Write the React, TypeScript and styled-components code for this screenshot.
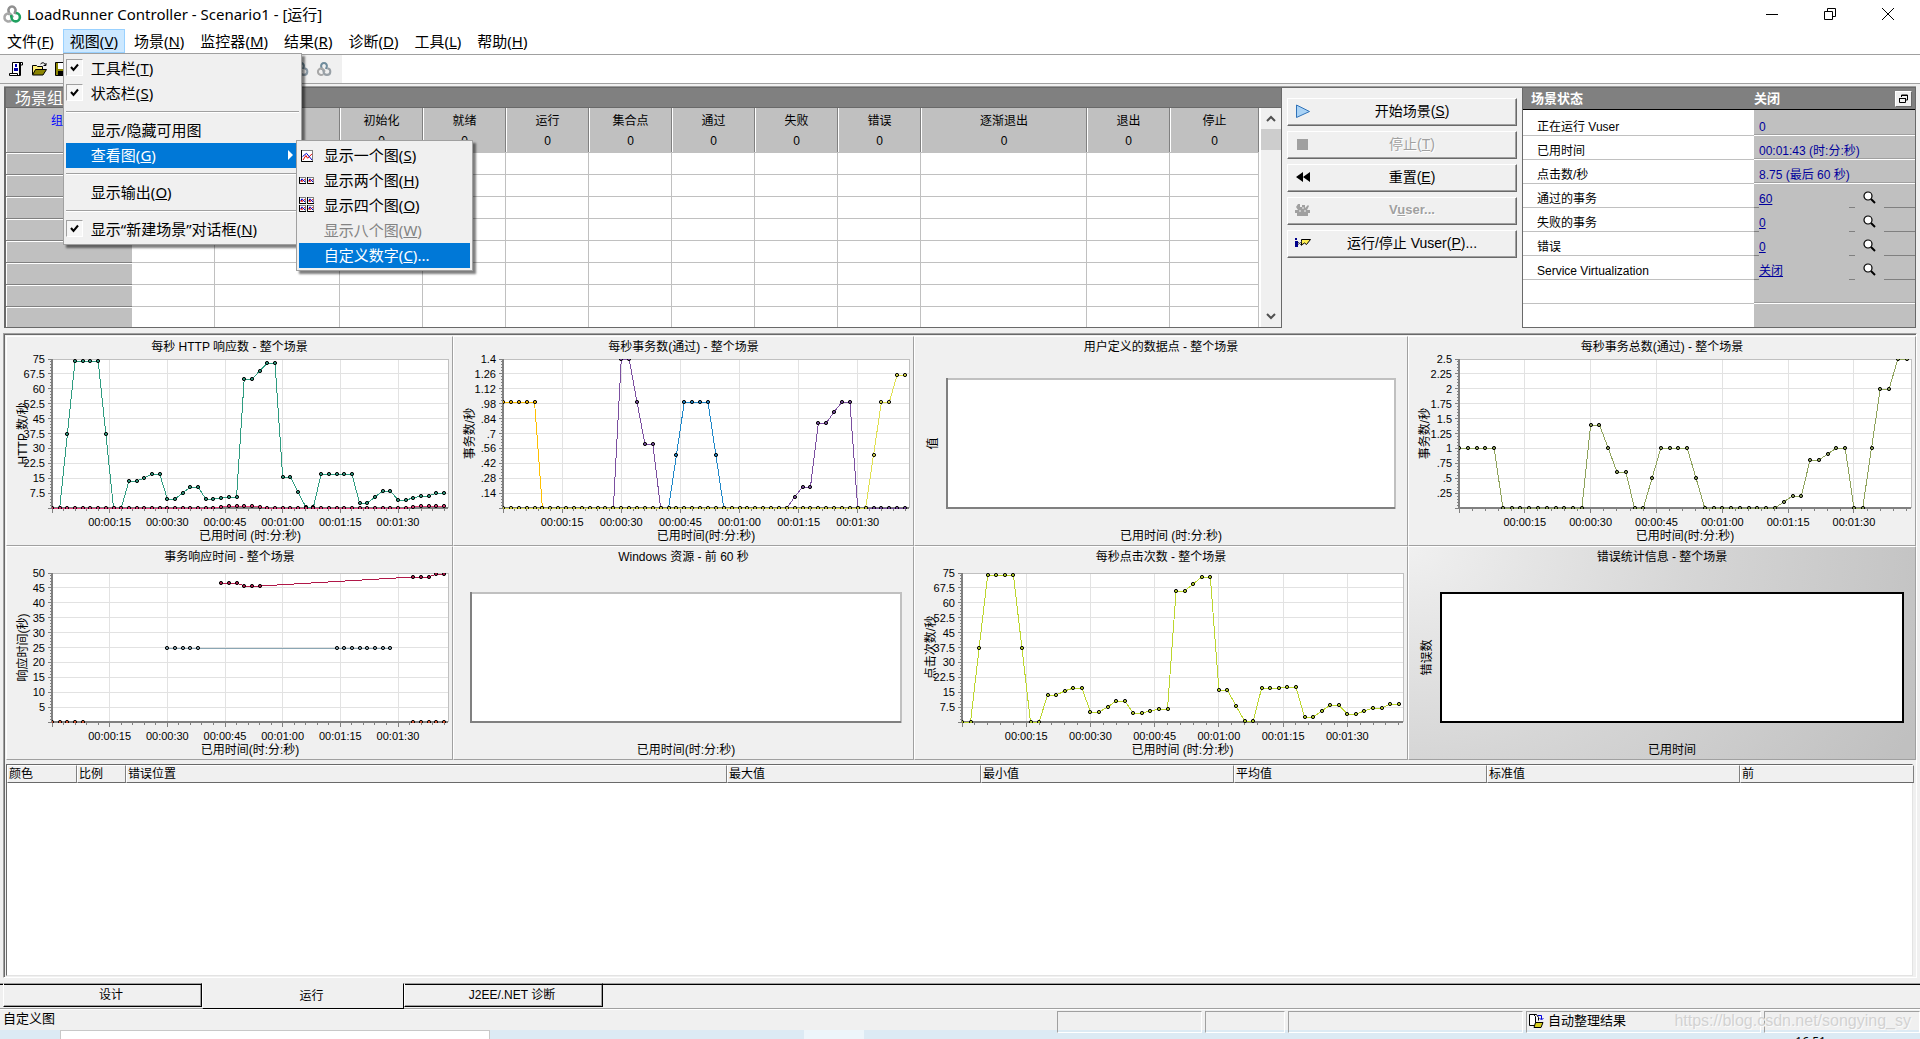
import React, { useLayoutEffect, useRef, useState } from "react";
import styled, { createGlobalStyle, css } from "styled-components";

const uiFont = `"Noto Sans", "Noto Sans CJK SC", sans-serif`;
const smallFont = `"Liberation Sans", "Noto Sans CJK SC", sans-serif`;

const Global = createGlobalStyle`
  * { box-sizing: border-box; }
  body { margin: 0; background: #f0f0f0; overflow: hidden; }
  button { font: inherit; color: inherit; border: 0; padding: 0; background: none; }
  table { border-collapse: separate; border-spacing: 0; table-layout: fixed; width: 100%; }
  th { font-weight: normal; padding: 0; }
  td { padding: 0; }
`;

const Window = styled.div`
  display: flex;
  flex-direction: column;
  height: 100vh;
  background: #f0f0f0;
  color: #000;
  font-family: ${smallFont};
  font-size: 12px;
  line-height: 16px;
`;

/* ---------- title bar and menus ---------- */

const TitleBar = styled.header`
  display: flex;
  align-items: center;
  height: 29px;
  padding: 0 3px 2px 2px;
  background: #fff;
  font-family: ${uiFont};
`;
const AppTitle = styled.h1`
  flex: 1;
  margin: 0 0 0 5px;
  font-size: 15px;
  font-weight: normal;
  line-height: 24px;
`;
const CaptionButton = styled.button`
  display: grid;
  place-items: center;
  width: 58px;
  height: 27px;
`;
const MenuBar = styled.nav`
  display: flex;
  gap: 2px;
  height: 26px;
  background: #fff;
  border-bottom: 1px solid #a0a0a0;
  font-family: ${uiFont};
  font-size: 15px;
  line-height: 22px;
`;
const MenuHolder = styled.div`
  position: relative;
`;
const MenuTitle = styled.button<{ $open?: boolean }>`
  height: 24px;
  padding: 0 6px;
  white-space: nowrap;
  border: 1px solid ${(p) => (p.$open ? "#99d1ff" : "transparent")};
  background: ${(p) => (p.$open ? "#cce8ff" : "transparent")};
`;
const Popup = styled.div<{ $sub?: boolean }>`
  position: absolute;
  z-index: ${(p) => (p.$sub ? 6 : 5)};
  top: ${(p) => (p.$sub ? "-3px" : "24px")};
  left: ${(p) => (p.$sub ? "230px" : "0")};
  width: ${(p) => (p.$sub ? "177px" : "239px")};
  padding: 2px;
  border: 1px solid #a0a0a0;
  background: #f0f0f0;
  box-shadow: 3px 3px 2px rgba(0, 0, 0, 0.5);
`;
const ItemHolder = styled.div`
  position: relative;
`;
const MenuItem = styled.button<{ $active?: boolean }>`
  display: flex;
  align-items: center;
  width: 100%;
  height: 25px;
  padding: 0 5px 2px 0;
  text-align: left;
  white-space: nowrap;
  color: ${(p) => (p.$active ? "#fff" : "#000")};
  background: ${(p) => (p.$active ? "#0078d7" : "transparent")};
  &:disabled { color: #838383; }
`;
const MenuIcon = styled.span`
  display: grid;
  place-items: center;
  width: 17px;
  height: 17px;
  margin-right: 8px;
`;
const CheckIcon = styled(MenuIcon)`
  border: 1px solid;
  border-color: #a0a0a0 #fff #fff #a0a0a0;
  background: #f6f6f6;
`;
const MenuText = styled.span`
  flex: 1;
`;
const MenuRule = styled.hr`
  height: 2px;
  margin: 5px 0;
  border: 0;
  border-top: 1px solid #a0a0a0;
  border-bottom: 1px solid #fff;
`;

/* ---------- tool bar ---------- */

const ToolBar = styled.div`
  height: 29px;
  background: #fff;
  border-bottom: 1px solid #a0a0a0;
`;
const ToolStrip = styled.div`
  display: flex;
  align-items: center;
  gap: 7px;
  width: 342px;
  height: 28px;
  padding: 0 10px 0 8px;
  background: #f0f0f0;
`;
const ToolButton = styled.button<{ $last?: boolean }>`
  display: grid;
  width: 16px;
  height: 16px;
  margin-left: ${(p) => (p.$last ? "auto" : "0")};
`;

/* ---------- upper row ---------- */

const Upper = styled.section`
  display: flex;
  height: 241px;
  margin: 3px 4px 5px;
  box-shadow: 0 -1px 0 #a0a0a0;
`;
const GroupPanel = styled.div`
  flex: 1;
  min-width: 0;
  display: flex;
  flex-direction: column;
  border: 1px solid #696969;
  border-left: 2px solid #696969;
`;
const GroupTitle = styled.h2`
  margin: 0;
  height: 20px;
  padding-left: 9px;
  overflow: hidden;
  background: #808080;
  border-bottom: 1px solid #696969;
  color: #fff;
  font-size: 16px;
  font-weight: normal;
  line-height: 22px;
`;
const GridArea = styled.div`
  flex: 1;
  min-height: 0;
  display: flex;
`;
const GridView = styled.div`
  flex: 1;
  overflow: hidden;
  padding-right: 2px;
  background: #fff;
`;
const ColumnHead = styled.th<{ $link?: boolean }>`
  height: 44px;
  padding: 3px 0 0;
  vertical-align: top;
  background: #c0c0c0;
  border-left: 1px solid #fff;
  border-right: 1px solid #808080;
  color: ${(p) => (p.$link ? "#00f" : "#000")};
  line-height: 20px;
`;
const RowHead = styled.th`
  height: 22px;
  background: #c0c0c0;
  border-top: 1px solid #808080;
  box-shadow: inset 1px 1px 0 #fff;
`;
const GridCell = styled.td`
  height: 22px;
  border-top: 1px solid #c0c0c0;
  border-right: 1px solid #c0c0c0;
`;
const ScrollTrack = styled.div`
  display: flex;
  flex-direction: column;
  width: 20px;
  background: #f0f0f0;
`;
const ScrollArrow = styled.button`
  display: grid;
  place-items: center;
  height: 21px;
`;
const ScrollThumb = styled.div`
  height: 21px;
  background: #cdcdcd;
`;
const ScrollSpace = styled.div`
  flex: 1;
`;
const Actions = styled.div`
  display: flex;
  flex-direction: column;
  gap: 5px;
  width: 240px;
  padding: 10px 5px 0;
  border-top: 1px solid #696969;
`;
const ActionButton = styled.button`
  display: grid;
  grid-template-columns: 30px 1fr 10px;
  align-items: center;
  height: 28px;
  padding-bottom: 2px;
  border: 1px solid;
  border-color: #fff #696969 #696969 #fff;
  box-shadow: inset -1px -1px 0 #a0a0a0;
  font-size: 14px;
  line-height: 20px;
  &:disabled { color: #a0a0a0; text-shadow: 1px 1px 0 #fff; }
`;
const ActionIcon = styled.span`
  display: grid;
  place-items: center;
`;
const ActionText = styled.span<{ $bold?: boolean }>`
  font-weight: ${(p) => (p.$bold ? "bold" : "normal")};
  font-size: ${(p) => (p.$bold ? "13px" : "14px")};
  text-align: center;
  white-space: nowrap;
`;
const StatusPanel = styled.div`
  display: flex;
  flex-direction: column;
  width: 394px;
  overflow: hidden;
  border: 1px solid #696969;
  background: linear-gradient(90deg, #fff 231px, #c0c0c0 231px);
`;
const StatusHead = styled.div`
  display: grid;
  flex: none;
  grid-template-columns: 223px 1fr 18px;
  align-items: center;
  height: 22px;
  margin-bottom: 2px;
  padding: 0 2px 0 8px;
  background: #808080;
  border-bottom: 1px solid #000;
  color: #fff;
  font-size: 13px;
  font-weight: bold;
`;
const RestoreButton = styled.button`
  display: grid;
  place-items: center;
  width: 17px;
  height: 16px;
  background: #f0f0f0;
  border: 1px solid;
  border-color: #fff #696969 #696969 #fff;
`;
const StatusName = styled.th`
  height: 24px;
  padding: 7px 0 0 14px;
  text-align: left;
  border-bottom: 1px solid #c0c0c0;
`;
const StatusValue = styled.td<{ $gap?: boolean }>`
  height: 24px;
  padding: 7px 0 0 5px;
  color: #00009c;
  ${(p) =>
    p.$gap
      ? css`
          border-bottom: 1px solid transparent;
          background-origin: border-box;
          background-image:
            linear-gradient(#808080, #808080),
            linear-gradient(#808080, #808080),
            linear-gradient(#808080, #808080);
          background-position: left bottom, right bottom, right 60px bottom;
          background-size: 5px 1px, 31px 1px, 6px 1px;
          background-repeat: no-repeat;
        `
      : css`
          border-bottom: 1px solid #fff;
          box-shadow: inset 0 -1px 0 #a0a0a0;
        `}
`;
const StatusLine = styled.div`
  display: flex;
  justify-content: space-between;
  align-items: flex-start;
  padding-right: 39px;
`;
const StatusLink = styled.a`
  color: #00009c;
`;
const FindButton = styled.button`
  display: grid;
  width: 13px;
  height: 13px;
`;

/* ---------- charts ---------- */

const Lower = styled.section`
  flex: 1;
  min-height: 0;
  display: flex;
  flex-direction: column;
  margin: 0 3px 5px 3px;
  border: 1px solid;
  border-color: #a0a0a0 #fff #fff #a0a0a0;
  box-shadow: inset 1px 1px 0 #696969;
  padding: 2px 0 0 2px;
`;
const ChartGrid = styled.div`
  display: grid;
  grid-template-columns: 447fr 461fr 494fr 508fr;
  grid-template-rows: 210px 214px;
`;
const ChartCell = styled.figure<{ $shaded?: boolean }>`
  display: flex;
  flex-direction: column;
  min-width: 0;
  margin: 0;
  border: 1px solid;
  border-color: #fff #a0a0a0 #a0a0a0 #fff;
  background: ${(p) =>
    p.$shaded
      ? "radial-gradient(ellipse 560px 420px at top left, #f0f0f0 0%, #d6d6d6 50%, #c0c0c0 100%)"
      : "#f0f0f0"};
`;
const ChartTitle = styled.figcaption`
  height: 20px;
  line-height: 20px;
  text-align: center;
`;
const ChartBody = styled.div`
  flex: 1;
  min-height: 0;
  position: relative;
`;
const ChartSvg = styled.svg`
  display: block;
  position: absolute;
  inset: 0;
  width: 100%;
  height: 100%;
  overflow: visible;
  font-family: ${smallFont};
`;
const AxisTitle = styled.div<{ $left: number; $right: number }>`
  height: 18px;
  padding: 0 ${(p) => p.$right}px 0 ${(p) => p.$left}px;
  line-height: 18px;
  text-align: center;
`;

type Pt = [number, number];
interface Series {
  color: string;
  line?: string;
  points: Pt[];
}
interface ChartSpec {
  title: string;
  yTitle?: string;
  xTitle: string;
  left: number;
  max?: number;
  labels?: string[];
  series?: Series[];
  shaded?: boolean;
}

const END = 103;
const every2 = (start: number, values: number[]): Pt[] =>
  values.map((v, i) => [start + i * 2, v]);
const flat = (from: number, to: number, v: number): Pt[] =>
  every2(from, Array((to - from) / 2 + 1).fill(v));

const scale75 = ["75", "67.5", "60", "52.5", "45", "37.5", "30", "22.5", "15", "7.5"];

const charts: ChartSpec[] = [
  {
    title: "每秒 HTTP 响应数 - 整个场景", yTitle: "HTTP 数/秒", xTitle: "已用时间 (时:分:秒)",
    left: 45, max: 75, labels: scale75,
    series: [
      {
        color: "#2e9c80",
        points: every2(0, [0, 0, 37, 74, 74, 74, 74, 37, 0, 0, 13.5, 13.5, 15, 17, 17, 4.5, 4.5, 7.5, 10.5, 10.5, 4.5, 4.5, 5, 5.5, 5.5, 65, 65, 69, 73, 73, 15.5, 15.5, 8, 0.3, 0.3, 17, 17, 17, 17, 17, 2.5, 2.5, 5.5, 8.5, 8.5, 4, 4, 5, 6, 6, 7.5, 7.5]),
      },
      {
        color: "#e8407c",
        points: [...flat(0, 42, 0), [44, 0.4], ...flat(46, 52, 0.9), [54, 0.4], ...flat(56, 92, 0), [94, 0.4], ...flat(96, 102, 0.9)],
      },
    ],
  },
  {
    title: "每秒事务数(通过) - 整个场景", yTitle: "事务数/秒", xTitle: "已用时间(时:分:秒)",
    left: 49, max: 1.4, labels: ["1.4", "1.26", "1.12", ".98", ".84", ".7", ".56", ".42", ".28", ".14"],
    series: [
      { color: "#ffc000", points: [...flat(0, 8, 1), [10, 0]] },
      {
        color: "#7b4fa0",
        points: [[28, 0], [30, 1.4], [32, 1.4], [34, 1], [36, 0.6], [38, 0.6], [40, 0], [72, 0], [74, 0.1], [76, 0.2], [78, 0.2], [80, 0.8], [82, 0.8], [84, 0.9], [86, 1], [88, 1], ...flat(90, 102, 0)],
      },
      { color: "#1f87c8", points: [[42, 0], [44, 0.5], ...flat(46, 52, 1), [54, 0.5], [56, 0]] },
      { color: "#e0e050", points: [...flat(0, 92, 0), [94, 0.5], [96, 1], [98, 1], [100, 1.25], [102, 1.25]] },
    ],
  },
  { title: "用户定义的数据点 - 整个场景", yTitle: "值", xTitle: "已用时间 (时:分:秒)", left: 32 },
  {
    title: "每秒事务总数(通过) - 整个场景", yTitle: "事务数/秒", xTitle: "已用时间(时:分:秒)",
    left: 50, max: 2.5, labels: ["2.5", "2.25", "2", "1.75", "1.5", "1.25", "1", ".75", ".5", ".25"],
    series: [
      {
        color: "#8fa35c",
        points: [...flat(0, 8, 1), ...flat(10, 28, 0), [30, 1.4], [32, 1.4], [34, 1], [36, 0.6], [38, 0.6], [40, 0], [42, 0], [44, 0.5], ...flat(46, 52, 1), [54, 0.5], ...flat(56, 72, 0), [74, 0.1], [76, 0.2], [78, 0.2], [80, 0.8], [82, 0.8], [84, 0.9], [86, 1], [88, 1], [90, 0], [92, 0], [94, 1], [96, 2], [98, 2], [100, 2.5], [102, 2.5]],
      },
    ],
  },
  {
    title: "事务响应时间 - 整个场景", yTitle: "响应时间(秒)", xTitle: "已用时间(时:分:秒)",
    left: 45, max: 50, labels: ["50", "45", "40", "35", "30", "25", "20", "15", "10", "5"],
    series: [
      { color: "#b01848", points: [...flat(44, 48, 46.8), ...flat(50, 54, 45.8), ...flat(94, 98, 48.8), [100, 49.7], [102, 49.7]] },
      { color: "#8aa6b4", points: [...flat(30, 34, 25), [36, 24.7], [38, 24.7], ...flat(74, 88, 25)] },
      { color: "#e8603c", line: "none", points: [...flat(0, 8, 0), ...flat(94, 102, 0)] },
    ],
  },
  { title: "Windows 资源 - 前 60 秒", xTitle: "已用时间(时:分:秒)", left: 17 },
  {
    title: "每秒点击次数 - 整个场景", yTitle: "点击次数/秒", xTitle: "已用时间 (时:分:秒)",
    left: 47, max: 75, labels: scale75,
    series: [
      {
        color: "#bcd62e",
        points: every2(0, [0, 0, 37, 74, 74, 74, 74, 37, 0, 0, 13.5, 13.5, 15.5, 17, 17, 5, 5, 7.5, 10.5, 10.5, 4.5, 4.5, 5.5, 6.5, 6.5, 66, 66, 69.5, 73, 73, 16, 16, 8, 0.5, 0.5, 17, 17, 17, 17.5, 17.5, 2.5, 2.5, 5.5, 8.5, 8.5, 4, 4, 5.5, 7, 7, 9, 9]),
      },
    ],
  },
  { title: "错误统计信息 - 整个场景", yTitle: "错误数", xTitle: "已用时间", left: 32, shaded: true },
];

function Plot({ spec }: { spec: ChartSpec }) {
  const box = useRef<HTMLDivElement>(null);
  const [size, setSize] = useState({ w: 440, h: 170 });
  useLayoutEffect(() => {
    const el = box.current;
    if (!el) return;
    const read = () => setSize({ w: el.clientWidth, h: el.clientHeight });
    read();
    const watcher = new ResizeObserver(read);
    watcher.observe(el);
    return () => watcher.disconnect();
  }, []);
  const { w, h } = size;
  const left = spec.left;
  const bottom = h - 19;

  if (!spec.series || !spec.labels || !spec.max) {
    const right = w - 12;
    const top = bottom - 129;
    const light = spec.shaded ? "#000" : "#c0c0c0";
    const dark = spec.shaded ? "#000" : "#808080";
    return (
      <ChartBody ref={box}>
        <ChartSvg aria-hidden="true">
          <rect x={left} y={top} width={right - left} height={bottom - top} fill="#fff" />
          <path d={`M${left} ${top}H${right}V${bottom + 1}`} fill="none" stroke={light} strokeWidth="2" />
          <path d={`M${left} ${top - 1}V${bottom}H${right}`} fill="none" stroke={dark} strokeWidth="2" />
          {spec.yTitle && (
            <text x={0} y={0} fontSize="12" textAnchor="middle" transform={`translate(22 ${(top + bottom) / 2}) rotate(-90)`}>
              {spec.yTitle}
            </text>
          )}
        </ChartSvg>
      </ChartBody>
    );
  }

  const right = w - 4;
  const top = bottom - 149;
  const pw = right - left;
  const ph = bottom - top;
  const max = spec.max;
  const px = (t: number) => (t / END) * pw;
  const py = (v: number) => Math.round(ph - (v / max) * ph);
  const minorX = Array.from({ length: 35 }, (_, i) => i * 3);
  const minorY = Array.from({ length: 50 }, (_, i) => i);
  const majors = [15, 30, 45, 60, 75, 90];
  return (
    <ChartBody ref={box}>
      <ChartSvg aria-hidden="true">
        <rect x={left} y={top} width={pw} height={ph} fill="#fff" />
        <g shapeRendering="crispEdges" stroke="#e2e2e2">
          {spec.labels.map((l, i) => (
            <line key={l} x1={left} x2={right} y1={top + (i * ph) / 10} y2={top + (i * ph) / 10} />
          ))}
          {majors.map((t) => (
            <line key={t} x1={left + px(t)} x2={left + px(t)} y1={top} y2={bottom} />
          ))}
        </g>
        <path d={`M${left} ${top}H${right}V${bottom}`} shapeRendering="crispEdges" fill="none" stroke="#c0c0c0" />
        <path d={`M${left} ${top}V${bottom}H${right}`} shapeRendering="crispEdges" fill="none" stroke="#808080" strokeWidth="2" />
        <g shapeRendering="crispEdges" stroke="#808080">
          {minorY.map((i) => (
            <line key={i} x1={left - (i % 5 ? 2 : 4)} x2={left} y1={top + (i * ph) / 50} y2={top + (i * ph) / 50} />
          ))}
          <line x1={left - 4} x2={left} y1={bottom} y2={bottom} />
          {minorX.map((t) => (
            <line key={t} x1={left + px(t)} x2={left + px(t)} y1={bottom} y2={bottom + (t % 15 ? 3 : 5)} />
          ))}
        </g>
        <svg x={left} y={top} width={pw} height={ph + 1} overflow="hidden">
          {spec.series.map((s) => (
            <g key={s.color}>
              <polyline
                points={s.points.map(([t, v]) => `${px(t)},${py(v)}`).join(" ")}
                fill="none"
                stroke={s.line ?? s.color}
                strokeWidth="1"
                shapeRendering="crispEdges"
              />
              {s.points.map(([t, v]) => (
                <circle key={t} cx={Math.round(px(t))} cy={py(v)} r="1.6" fill={s.color} stroke="#000" />
              ))}
            </g>
          ))}
        </svg>
        <g fontSize="11">
          {spec.labels.map((l, i) => (
            <text key={l} x={left - 7} y={top + (i * ph) / 10 + 4} textAnchor="end">{l}</text>
          ))}
          {majors.map((t) => (
            <text key={t} x={left + px(t)} y={bottom + 18} textAnchor="middle">
              {`00:0${Math.floor(t / 60)}:${String(t % 60).padStart(2, "0")}`}
            </text>
          ))}
        </g>
        <text fontSize="12" textAnchor="middle" transform={`translate(20 ${top + ph / 2}) rotate(-90)`}>
          {spec.yTitle}
        </text>
      </ChartSvg>
    </ChartBody>
  );
}

/* ---------- legend list ---------- */

const Legend = styled.div`
  flex: 1;
  min-height: 0;
  margin: 4px 3px 1px 0;
  background: #fff;
  border: 1px solid #696969;
  border-right-color: #e3e3e3;
  border-bottom-color: #e3e3e3;
`;
const LegendHead = styled.th`
  height: 18px;
  padding-left: 1px;
  text-align: left;
  line-height: 14px;
  background: #f0f0f0;
  border: 1px solid;
  border-color: #fff #808080 #696969 #fff;
`;

/* ---------- tabs and status bar ---------- */

const Tabs = styled.div`
  display: flex;
  align-items: flex-start;
  height: 26px;
  border-bottom: 1px solid #a0a0a0;
  padding-left: 3px;
  background: linear-gradient(#a0a0a0 1px, #000 1px, #000 2px, transparent 2px);
`;
const Tab = styled.button<{ $active?: boolean }>`
  width: ${(p) => (p.$active ? "202px" : "199px")};
  height: ${(p) => (p.$active ? "26px" : "24px")};
  padding-left: 17px;
  background: #f0f0f0;
  border: 1px solid;
  border-color: ${(p) => (p.$active ? "#f0f0f0 #000 #000 #fff" : "#a0a0a0 #000 #000 #fff")};
  box-shadow: ${(p) => (p.$active ? "none" : "inset 0 1px 0 #000, inset -1px -1px 0 #a0a0a0")};
`;
const StatusBar = styled.footer`
  position: relative;
  display: grid;
  grid-template-columns: 1fr 145px 80px 235px 235px 156px;
  gap: 3px;
  height: 21px;
  border-top: 1px solid #fff;
  font-size: 13px;
  line-height: 18px;
`;
const StatusMessage = styled.span`
  padding-left: 3px;
`;
const StatusCell = styled.span`
  display: flex;
  align-items: center;
  gap: 4px;
  margin-top: 1px;
  padding: 0 0 2px 1px;
  border: 1px solid;
  border-color: #a0a0a0 #fff #fff #a0a0a0;
`;
const Watermark = styled.span`
  position: absolute;
  right: 9px;
  top: 2px;
  color: #d2d2d2;
  font-size: 16px;
  text-shadow: 1px 1px 0 #fafafa;
`;
const TaskBar = styled.div`
  display: flex;
  height: 9px;
  overflow: hidden;
  padding-left: 60px;
  background: #dceaf4;
`;
const TaskSearch = styled.div`
  width: 430px;
  border: 1px solid #c8c8c8;
  border-bottom: 0;
  background: #fff;
`;
const TaskActive = styled.div`
  width: 60px;
  margin-left: 314px;
  background: #edf5fa;
`;
const Clock = styled.time`
  margin-left: auto;
  padding: 4px 94px 0 0;
  font-family: ${uiFont};
`;

/* ---------- icons ---------- */

const Rings = ({ size, top, left, right }: { size: number; top: string; left: string; right: string }) => (
  <svg width={size} height={size} viewBox="0 0 20 20" fill="none" strokeWidth="2.6" aria-hidden="true">
    <path d="M7.500 11L6.500 7a3.600 3.600 0 1 1 7 0l-1 3" stroke={top} />
    <path d="M9 16.500A4 4 0 1 1 7 9.500c2 0 3 2 4 4" stroke={left} />
    <path d="M14 9a4.200 4.200 0 1 1-4.500 4.500L9 11" stroke={right} />
  </svg>
);
const ScriptIcon = () => (
  <svg width="16" height="16" aria-hidden="true">
    <path d="M4.500 12V1.500H14.500V4H12.500V14.500H1.500V12.500H9.500V14" fill="#fff" stroke="#000" />
    <path d="M12 2v12" stroke="#000" strokeWidth="2" />
    <path d="M7 3h2v3H7zM6 7h4v3H6z" fill="#00a" />
  </svg>
);
const OpenIcon = () => (
  <svg width="16" height="16" aria-hidden="true">
    <path d="M1.500 13.500V4.500h4l1 1h5v3" fill="#ffef7a" stroke="#000" />
    <path d="M1.500 14L4.500 8.500h11L12 14z" fill="#8a8400" stroke="#000" />
    <path d="M9.500 3q3-3 5 1M12.500 4.500h2.500V2" fill="none" stroke="#000" />
  </svg>
);
const SaveIcon = () => (
  <svg width="16" height="16" aria-hidden="true">
    <path d="M1.500 1.500h13v13h-13z" fill="#8a8400" stroke="#000" />
    <path d="M4 2h8v6H4z" fill="#fff" />
    <path d="M4 10h8v4H4z" />
  </svg>
);
const Check = () => (
  <svg width="9" height="9" aria-hidden="true">
    <path d="M1 4l2.500 3L8 1.500" fill="none" stroke="#000" strokeWidth="2" />
  </svg>
);
const MiniGraph = ({ x = 0, y = 0, s = 6 }: { x?: number; y?: number; s?: number }) => (
  <g transform={`translate(${x} ${y})`}>
    <rect x=".5" y=".5" width={s} height={s} fill="#fff" stroke="#808080" />
    <path d={`M.5 0V${s + 0.5}H${s + 1}`} fill="none" stroke="#000" />
    <path d={`M2 ${s - 1}L${s * 0.45} ${s * 0.5}L${s * 0.6} ${s * 0.75}L${s} ${s * 0.35}`} fill="none" stroke="#e00000" />
    <path d={`M1.500 ${s * 0.6}L${s * 0.5} ${s * 0.3}L${s} ${s - 1}`} fill="none" stroke="#0000c8" />
  </g>
);
const GraphIcon = ({ count }: { count: number }) => (
  <svg width="16" height="16" aria-hidden="true">
    {count === 1 && <MiniGraph x={2} y={3} s={11} />}
    {count === 2 && <><MiniGraph y={5} /><MiniGraph x={8} y={5} /></>}
    {count === 4 && <><MiniGraph /><MiniGraph x={8} /><MiniGraph y={8} /><MiniGraph x={8} y={8} /></>}
  </svg>
);
const FindIcon = () => (
  <svg width="13" height="13" aria-hidden="true">
    <circle cx="5" cy="5" r="4" fill="#fff" stroke="#000" strokeWidth="1.200" />
    <path d="M8 8l4 4" stroke="#000" strokeWidth="2" />
  </svg>
);
const PlayIcon = () => (
  <svg width="16" height="16" aria-hidden="true"><path d="M1.500 2l13 6.500-13 6z" fill="#a9d2f5" stroke="#2f72b8" /></svg>
);
const StopIcon = () => (
  <svg width="16" height="16" aria-hidden="true"><path d="M2 3h11v11H2z" fill="#a0a0a0" /></svg>
);
const RewindIcon = () => (
  <svg width="16" height="16" aria-hidden="true"><path d="M8 3v10L1 8zM15 3v10L8 8z" /></svg>
);
const UsersIcon = () => (
  <svg width="18" height="16" fill="#a0a0a0" aria-hidden="true">
    <path d="M4 2h2v3h2V3h3v3l3-3 1 1-2 4h3v3h-2v3H3v-3H1V8h3L2 5z" />
    <path d="M5 9h2M10 9h2M8 6h2" stroke="#f0f0f0" />
  </svg>
);
const RunStopIcon = () => (
  <svg width="18" height="16" aria-hidden="true">
    <path d="M1 3h2v2H1zM1 6h3v6H1z" fill="#00008b" />
    <path d="M7.500 4.500h9l-4 5-2-1.500-3 2z" fill="#ffef50" stroke="#000" />
    <path d="M4 7l4 4M4 9.500l4-3" stroke="#555" />
  </svg>
);
const CollateIcon = () => (
  <svg width="16" height="16" aria-hidden="true">
    <path d="M1.500 1.500h4l2 2v9h-6zM4.500 1.500h4l2 3v3" fill="#fff" stroke="#000" />
    <path d="M10 2.500h3.500V6M11.500 5l2 2 2-2" fill="none" stroke="#0000e0" />
    <path d="M6 14.500l1.500-5h7.500l-2 5z" fill="#d8d020" stroke="#000" />
  </svg>
);

/* ---------- content ---------- */

const Key = ({ text, k, tail = "" }: { text: string; k: string; tail?: string }) => (
  <>{text}(<u>{k}</u>){tail}</>
);

const columns: [string, number][] = [
  ["组名称", 126], ["", 83], ["", 125], ["初始化", 83], ["就绪", 83], ["运行", 83], ["集合点", 83],
  ["通过", 83], ["失败", 83], ["错误", 83], ["逐渐退出", 166], ["退出", 83], ["停止", 89],
];
const statusRows: { name: string; value: string; link?: boolean }[] = [
  { name: "正在运行 Vuser", value: "0" },
  { name: "已用时间", value: "00:01:43 (时:分:秒)" },
  { name: "点击数/秒", value: "8.75 (最后 60 秒)" },
  { name: "通过的事务", value: "60", link: true },
  { name: "失败的事务", value: "0", link: true },
  { name: "错误", value: "0", link: true },
  { name: "Service Virtualization", value: "关闭", link: true },
  { name: "", value: "" },
];
const legendColumns: [string, number][] = [
  ["颜色", 70], ["比例", 49], ["错误位置", 601], ["最大值", 254], ["最小值", 253], ["平均值", 253], ["标准值", 253], ["前", 174],
];

export default function App() {
  return (
    <Window>
      <Global />
      <TitleBar>
        <Rings size={20} top="#909090" left="#a8a8a8" right="#20a060" />
        <AppTitle>LoadRunner Controller - Scenario1 - [运行]</AppTitle>
        <CaptionButton aria-label="最小化"><svg width="12" height="12"><path d="M0 6.500h12" stroke="#000" /></svg></CaptionButton>
        <CaptionButton aria-label="还原"><svg width="12" height="12"><path d="M.5 3.500h8v8h-8zM3.500 3V.5h8v8H9" fill="none" stroke="#000" /></svg></CaptionButton>
        <CaptionButton aria-label="关闭"><svg width="12" height="12"><path d="M0 0l12 12M12 0L0 12" stroke="#000" /></svg></CaptionButton>
      </TitleBar>

      <MenuBar>
        <MenuTitle><Key text="文件" k="F" /></MenuTitle>
        <MenuHolder>
          <MenuTitle $open><Key text="视图" k="V" /></MenuTitle>
          <Popup>
            <MenuItem><CheckIcon><Check /></CheckIcon><MenuText><Key text="工具栏" k="T" /></MenuText></MenuItem>
            <MenuItem><CheckIcon><Check /></CheckIcon><MenuText><Key text="状态栏" k="S" /></MenuText></MenuItem>
            <MenuRule />
            <MenuItem><MenuIcon /><MenuText>显示/隐藏可用图</MenuText></MenuItem>
            <ItemHolder>
              <MenuItem $active>
                <MenuIcon /><MenuText><Key text="查看图" k="G" /></MenuText>
                <svg width="6" height="10" aria-hidden="true"><path d="M0 0l5 5-5 5z" fill="#fff" /></svg>
              </MenuItem>
              <Popup $sub>
                <MenuItem><MenuIcon><GraphIcon count={1} /></MenuIcon><MenuText><Key text="显示一个图" k="S" /></MenuText></MenuItem>
                <MenuItem><MenuIcon><GraphIcon count={2} /></MenuIcon><MenuText><Key text="显示两个图" k="H" /></MenuText></MenuItem>
                <MenuItem><MenuIcon><GraphIcon count={4} /></MenuIcon><MenuText><Key text="显示四个图" k="O" /></MenuText></MenuItem>
                <MenuItem disabled><MenuIcon /><MenuText><Key text="显示八个图" k="W" /></MenuText></MenuItem>
                <MenuItem $active><MenuIcon /><MenuText><Key text="自定义数字" k="C" tail="..." /></MenuText></MenuItem>
              </Popup>
            </ItemHolder>
            <MenuRule />
            <MenuItem><MenuIcon /><MenuText><Key text="显示输出" k="O" /></MenuText></MenuItem>
            <MenuRule />
            <MenuItem><CheckIcon><Check /></CheckIcon><MenuText><Key text="显示“新建场景”对话框" k="N" /></MenuText></MenuItem>
          </Popup>
        </MenuHolder>
        <MenuTitle><Key text="场景" k="N" /></MenuTitle>
        <MenuTitle><Key text="监控器" k="M" /></MenuTitle>
        <MenuTitle><Key text="结果" k="R" /></MenuTitle>
        <MenuTitle><Key text="诊断" k="D" /></MenuTitle>
        <MenuTitle><Key text="工具" k="L" /></MenuTitle>
        <MenuTitle><Key text="帮助" k="H" /></MenuTitle>
      </MenuBar>

      <ToolBar>
        <ToolStrip>
          <ToolButton aria-label="新建"><ScriptIcon /></ToolButton>
          <ToolButton aria-label="打开"><OpenIcon /></ToolButton>
          <ToolButton aria-label="保存"><SaveIcon /></ToolButton>
          <ToolButton $last aria-label="分析"><Rings size={16} top="#6f8c9c" left="#9aa6ae" right="#8a9aa6" /></ToolButton>
          <ToolButton aria-label="生成器"><Rings size={16} top="#6f8c9c" left="#a8a8a8" right="#98a0a6" /></ToolButton>
        </ToolStrip>
      </ToolBar>

      <Upper>
        <GroupPanel>
          <GroupTitle>场景组</GroupTitle>
          <GridArea>
            <GridView>
              <table>
                <colgroup>{columns.map(([, w], i) => <col key={i} width={w} />)}</colgroup>
                <thead>
                  <tr>
                    {columns.map(([name], i) => (
                      <ColumnHead key={i} $link={i === 0}>
                        {name}
                        {i > 2 && <><br />0</>}
                      </ColumnHead>
                    ))}
                  </tr>
                </thead>
                <tbody>
                  {Array.from({ length: 8 }, (_, r) => (
                    <tr key={r}>
                      <RowHead scope="row" />
                      {columns.slice(1).map((_, c) => <GridCell key={c} />)}
                    </tr>
                  ))}
                </tbody>
              </table>
            </GridView>
            <ScrollTrack>
              <ScrollArrow aria-label="向上"><svg width="10" height="7"><path d="M1 6l4-4 4 4" fill="none" stroke="#505050" strokeWidth="2" /></svg></ScrollArrow>
              <ScrollThumb />
              <ScrollSpace />
              <ScrollArrow aria-label="向下"><svg width="10" height="7"><path d="M1 1l4 4 4-4" fill="none" stroke="#505050" strokeWidth="2" /></svg></ScrollArrow>
            </ScrollTrack>
          </GridArea>
        </GroupPanel>

        <Actions>
          <ActionButton><ActionIcon><PlayIcon /></ActionIcon><ActionText><Key text="开始场景" k="S" /></ActionText></ActionButton>
          <ActionButton disabled><ActionIcon><StopIcon /></ActionIcon><ActionText><Key text="停止" k="T" /></ActionText></ActionButton>
          <ActionButton><ActionIcon><RewindIcon /></ActionIcon><ActionText><Key text="重置" k="E" /></ActionText></ActionButton>
          <ActionButton disabled><ActionIcon><UsersIcon /></ActionIcon><ActionText $bold>V<u>u</u>ser...</ActionText></ActionButton>
          <ActionButton><ActionIcon><RunStopIcon /></ActionIcon><ActionText><Key text="运行/停止 Vuser" k="P" tail="..." /></ActionText></ActionButton>
        </Actions>

        <StatusPanel>
          <StatusHead>
            <span>场景状态</span>
            <span>关闭</span>
            <RestoreButton aria-label="还原窗格">
              <svg width="11" height="10"><path d="M3.500 3V1h6v5H8M1.500 4.500h6v4h-6zM3 1.500h7M1 4.500h7" fill="none" stroke="#000" /></svg>
            </RestoreButton>
          </StatusHead>
          <table>
            <colgroup><col width={231} /><col width={161} /></colgroup>
            <tbody>
              {statusRows.map((row, i) => (
                <tr key={i}>
                  <StatusName scope="row">{row.name}</StatusName>
                  <StatusValue $gap={row.link}>
                    {row.link ? (
                      <StatusLine>
                        <StatusLink href="#">{row.value}</StatusLink>
                        <FindButton aria-label={`查看${row.name}`}><FindIcon /></FindButton>
                      </StatusLine>
                    ) : row.value}
                  </StatusValue>
                </tr>
              ))}
            </tbody>
          </table>
        </StatusPanel>
      </Upper>

      <Lower>
        <ChartGrid>
          {charts.map((c) => (
            <ChartCell key={c.title} $shaded={c.shaded}>
              <ChartTitle>{c.title}</ChartTitle>
              <Plot spec={c} />
              <AxisTitle $left={c.left} $right={c.series ? 4 : 12}>{c.xTitle}</AxisTitle>
            </ChartCell>
          ))}
        </ChartGrid>
        <Legend>
          <table>
            <colgroup>{legendColumns.map(([n, w]) => <col key={n} width={w} />)}</colgroup>
            <thead>
              <tr>{legendColumns.map(([n]) => <LegendHead key={n}>{n}</LegendHead>)}</tr>
            </thead>
          </table>
        </Legend>
      </Lower>

      <Tabs>
        <Tab>设计</Tab>
        <Tab $active>运行</Tab>
        <Tab>J2EE/.NET 诊断</Tab>
      </Tabs>
      <StatusBar>
        <StatusMessage>自定义图</StatusMessage>
        <StatusCell />
        <StatusCell />
        <StatusCell />
        <StatusCell><CollateIcon />自动整理结果</StatusCell>
        <StatusCell />
        <Watermark>https://blog.csdn.net/songying_sy</Watermark>
      </StatusBar>
      <TaskBar>
        <TaskSearch />
        <TaskActive />
        <Clock>16:51</Clock>
      </TaskBar>
    </Window>
  );
}
